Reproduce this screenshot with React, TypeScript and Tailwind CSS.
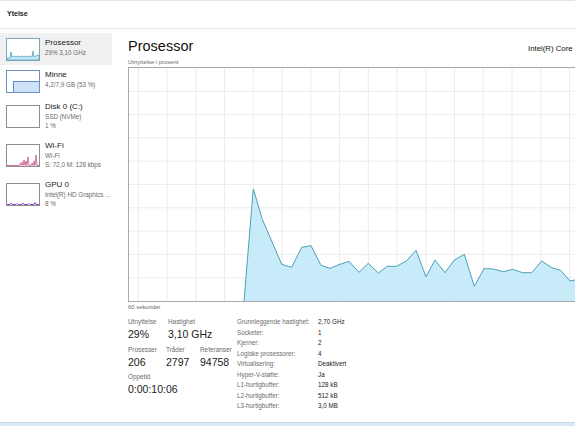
import type { ReactNode } from "react";

type Thumb = "cpu" | "mem" | "disk" | "wifi" | "gpu";

type SideItem = {
  key: Thumb;
  title: string;
  lines: string[];
  selected?: boolean;
};

const SIDE_ITEMS: SideItem[] = [
  { key: "cpu", title: "Prosessor", lines: ["29% 3,10 GHz"], selected: true },
  { key: "mem", title: "Minne", lines: ["4,2/7,9 GB (53 %)"] },
  { key: "disk", title: "Disk 0 (C:)", lines: ["SSD (NVMe)", "1 %"] },
  { key: "wifi", title: "Wi-Fi", lines: ["Wi-Fi", "S: 72,0 M: 128 kbps"] },
  { key: "gpu", title: "GPU 0", lines: ["Intel(R) HD Graphics ...", "8 %"] },
];

const SPECS: [string, string][] = [
  ["Grunnleggende hastighet:", "2,70 GHz"],
  ["Socketer:", "1"],
  ["Kjerner:", "2"],
  ["Logiske prosessorer:", "4"],
  ["Virtualisering:", "Deaktivert"],
  ["Hyper-V-støtte:", "Ja"],
  ["L1-hurtigbuffer:", "128 kB"],
  ["L2-hurtigbuffer:", "512 kB"],
  ["L3-hurtigbuffer:", "3,0 MB"],
];

// cpu usage samples, in page coordinates (chart inner box is 129..704 x 68..301)
const CPU_POINTS: [number, number][] = [
  [244, 301], [253.3, 189], [262.3, 219.3], [281.7, 264.3], [291.7, 267.3],
  [301.7, 247.3], [311, 245.7], [321, 265.3], [330, 268.3], [340, 264.3],
  [349, 261.3], [359, 272.3], [368.3, 263.3], [378.3, 273], [387.3, 266.3],
  [396.7, 266.3], [406.7, 260.7], [416, 250.3], [426, 276.7], [435, 260],
  [445, 272.7], [454.3, 260], [464.3, 254.3], [474.3, 286.3], [484, 268.7],
  [493.3, 269], [503.3, 271.7], [512.7, 269.3], [522.7, 272.7], [531.7, 272.7],
  [541.7, 261], [551.7, 267.7], [560.7, 270.3], [570, 281], [579.5, 279],
  [589, 272], [598.5, 277], [608, 270], [617.5, 275], [627, 268], [636.5, 274],
  [646, 271], [655.5, 276], [665, 269], [674.5, 273], [684, 270], [693.5, 275],
  [704, 272],
];

function Thumbnail({ kind }: { kind: Thumb }) {
  const border =
    kind === "cpu" ? "border-[#7fa3b8]" : kind === "mem" ? "border-[#6f8fbd]" : "border-[#8e8e8e]";
  return (
    <div className={`h-[23px] w-[34px] shrink-0 border bg-white ${border}`}>
      <svg width="32" height="21" viewBox="0 0 32 21" className="block">
        {kind === "cpu" && (
          <polygon
            points="0,21 0,19 3,19 4,13 5,18 7,17 9,18 11,17 13,18 15,17 17,18 19,17 21,18 23,17 25,18 26,12 27,18 29,17 31,16 32,17 32,21"
            fill="#c6e9f6"
            stroke="#4f9fbf"
            strokeWidth="0.8"
          />
        )}
        {kind === "mem" && (
          <rect x="6.5" y="10.5" width="26" height="11" fill="#cfe2f7" stroke="#5b8ccd" strokeWidth="1" />
        )}
        {kind === "wifi" && (
          <polyline
            points="0,20.5 12,20.5 13,18.5 14,20.5 15,17 16,20.5 17,15 18,20.5 19,16 20,20.5 21,12 22,20.5 24,20.5 25,18 26,20.5 27,16 28,20.5 29,10 30,20.5 32,20.5"
            fill="none"
            stroke="#c0417a"
            strokeWidth="0.7"
          />
        )}
        {kind === "gpu" && (
          <polyline
            points="0,20.5 3,20.5 4,19 5,20.5 9,20.5 10,19.5 11,20.5 15,20.5 16,19 17,20.5 21,20.5 22,19.5 23,20.5 27,20.5 28,18.5 29,20.5 32,20.5"
            fill="none"
            stroke="#7a3cc8"
            strokeWidth="0.9"
          />
        )}
      </svg>
    </div>
  );
}

function Sidebar() {
  return (
    <div className="flex w-[112px] shrink-0 flex-col pt-[4px]">
      {SIDE_ITEMS.map((item) => (
        <div
          key={item.key}
          className={`flex items-center pl-[6px] ${item.lines.length > 1 ? "h-[39px]" : "h-[32px]"} ${
            item.selected ? "bg-[#f0f0f0]" : ""
          }`}
        >
          <Thumbnail kind={item.key} />
          <div className="ml-[5px] min-w-0 self-start pt-[4px]">
            <div className="whitespace-nowrap text-[8px] leading-[11px] text-[#1a1a1a]">{item.title}</div>
            {item.lines.map((l) => (
              <div key={l} className="whitespace-nowrap text-[6.3px] leading-[9px] text-[#6a6a6a]">
                {l}
              </div>
            ))}
          </div>
        </div>
      ))}
    </div>
  );
}

function Chart() {
  const vLines = Array.from({ length: 20 }, (_, i) => 138.3 + i * 28.75);
  const hLines = Array.from({ length: 9 }, (_, i) => 68 + (i + 1) * 23.3);
  const pts = CPU_POINTS.map(([x, y]) => `${x},${y}`).join(" ");
  return (
    <div className="mt-[1px] h-[235px] w-[577px] shrink-0 border border-[#a9a9a9] bg-white">
      <svg width="575" height="233" viewBox="129 68 575 233" className="block">
        {vLines.map((x) => (
          <line key={`v${x}`} x1={x} y1={68} x2={x} y2={301} stroke="#ececec" strokeWidth="1" />
        ))}
        {hLines.map((y) => (
          <line key={`h${y}`} x1={129} y1={y} x2={704} y2={y} stroke="#ececec" strokeWidth="1" />
        ))}
        <polygon points={`${pts} 704,301`} fill="#c4eaf8" fillOpacity="0.95" />
        <polyline points={pts} fill="none" stroke="#4e9fb9" strokeWidth="1" />
      </svg>
    </div>
  );
}

function Stat({ label, value, w }: { label: string; value: ReactNode; w?: string }) {
  return (
    <div className={`shrink-0 ${w ?? ""}`}>
      <div className="text-[6.4px] leading-[8px] text-[#6b6b6b]">{label}</div>
      <div className="mt-[2px] whitespace-nowrap text-[10.5px] leading-[13px] text-[#1a1a1a]">{value}</div>
    </div>
  );
}

export default function App() {
  return (
    <div className="relative flex h-[426px] w-[575px] flex-col overflow-hidden bg-white font-['Liberation_Sans',Arial,sans-serif]">
      <div className="flex h-[29px] shrink-0 items-center border-t border-b border-[#e6e6e6] pl-[7px]">
        <span className="text-[7px] font-bold text-[#222]">Ytelse</span>
      </div>

      <div className="flex min-h-0 flex-1">
        <Sidebar />

        <div className="flex min-w-0 flex-1 flex-col pl-[16px] pt-[8px]">
          <div className="flex items-baseline">
            <div className="w-[400px] shrink-0 text-[14.5px] leading-[18px] text-[#111]">Prosessor</div>
            <div className="whitespace-nowrap text-[7.8px] text-[#111]">Intel(R) Core</div>
          </div>
          <div className="mt-[3px] text-[5.9px] leading-[8px] text-[#6b6b6b]">Utnyttelse i prosent</div>
          <Chart />
          <div className="mt-[1px] text-[5.9px] leading-[8px] text-[#6b6b6b]">60 sekunder</div>

          <div className="mt-[7px] flex">
            <div className="w-[109px] shrink-0">
              <div className="flex">
                <Stat label="Utnyttelse" value="29%" w="w-[40px]" />
                <Stat label="Hastighet" value="3,10 GHz" />
              </div>
              <div className="mt-[5px] flex">
                <Stat label="Prosesser" value="206" w="w-[38px]" />
                <Stat label="Tråder" value="2797" w="w-[34px]" />
                <Stat label="Referanser" value="94758" />
              </div>
              <div className="mt-[4px]">
                <Stat label="Oppetid" value="0:00:10:06" />
              </div>
            </div>

            <div className="-mt-[1px] flex flex-col">
              {SPECS.map(([k, v]) => (
                <div key={k} className="flex text-[6.3px] leading-[10.5px]">
                  <span className="w-[81px] shrink-0 whitespace-nowrap text-[#6b6b6b]">{k}</span>
                  <span className="whitespace-nowrap text-[#1a1a1a]">{v}</span>
                </div>
              ))}
            </div>
          </div>
        </div>
      </div>

      <div className="h-[4px] shrink-0 border-t border-[#c3d6e8] bg-[#dce9f5]" />
    </div>
  );
}
